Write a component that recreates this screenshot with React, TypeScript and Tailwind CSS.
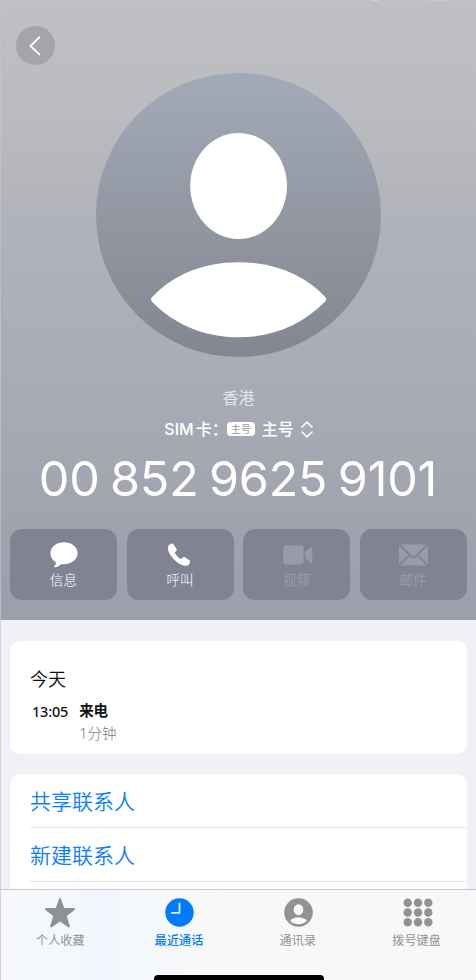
import type { ReactNode } from 'react';

interface Action {
  label: string;
  icon: ReactNode;
  disabled?: boolean;
}

interface Tab {
  label: string;
  icon: ReactNode;
  active?: boolean;
}

const actions: Action[] = [
  {
    label: '信息',
    icon: (
      <svg width="28" height="26" viewBox="0 0 28 26" fill="currentColor">
        <path d="M14 0.3C21.6 0.3 27.6 5.2 27.6 11.3C27.6 17.5 21.6 22.2 14 22.2C13 22.2 12.2 22.2 11.4 22C9.6 23.7 7.2 25.1 4.9 25.3C4 25.3 3.9 24.7 4.4 24.2C5.4 23 6 21.8 6 20.4C2.6 18.4 0.4 15.2 0.4 11.3C0.4 5.2 6.4 0.3 14 0.3Z" />
      </svg>
    ),
  },
  {
    label: '呼叫',
    icon: (
      <svg width="24" height="24" viewBox="0 0 24 24" fill="currentColor" className="mr-0.5">
        <path d="M3.3 1.1C4.7 0.2 6 0.6 6.9 1.9L9.3 5.4C10 6.5 9.9 7.4 9 8.3L8.1 9.2C7.8 9.6 7.8 10 8.1 10.5C9.4 12.6 11.2 14.4 13.3 15.8C13.8 16.1 14.2 16.1 14.6 15.8L15.5 14.8C16.4 13.9 17.3 13.8 18.4 14.5L22 17C23.2 17.9 23.5 19 22.7 20.3C21.3 22.6 19.1 23.3 16.5 22.6C12.8 21.6 9.3 18.9 6.3 15.7C3.5 12.7 1.6 9.5 1 6.6C0.6 4.2 1.3 2.3 3.3 1.1Z" />
      </svg>
    ),
  },
  {
    label: '视频',
    disabled: true,
    icon: (
      <svg width="30" height="20" viewBox="0 0 30 20" fill="currentColor" className="ml-[3px]">
        <rect x="0.2" y="0.5" width="20.4" height="19" rx="3.6" />
        <path d="M22.2 7L27.2 2.7C28.3 1.9 29.3 2.2 29.3 3.5V16.5C29.3 17.8 28.3 18.1 27.2 17.3L22.2 13Z" />
      </svg>
    ),
  },
  {
    label: '邮件',
    disabled: true,
    icon: (
      <svg width="29" height="22" viewBox="0 0 29 22" fill="currentColor">
        <path d="M1.5 0.5H27.5L16.6 11.1C15.2 12.5 13.8 12.5 12.4 11.1Z" />
        <path d="M0 1.8L9.4 11L0 20.2Z" />
        <path d="M29 1.8L19.6 11L29 20.2Z" />
        <path d="M1.5 21.5L10.5 12.2L11.6 13.2C13.5 15 15.5 15 17.4 13.2L18.5 12.2L27.5 21.5Z" />
      </svg>
    ),
  },
];

const tabs: Tab[] = [
  {
    label: '个人收藏',
    icon: (
      <svg width="32" height="30" viewBox="0 0 32 30" fill="currentColor" stroke="currentColor" strokeWidth="2" strokeLinejoin="round">
        <path d="M16 1L19.4 10.9L30 11.1L21.6 17.6L24.8 28.4L16 22.2L7.2 28.4L10.4 17.6L2 11.1L12.6 10.9Z" />
      </svg>
    ),
  },
  {
    label: '最近通话',
    active: true,
    icon: (
      <svg width="29" height="29" viewBox="0 0 29 29">
        <circle cx="14.5" cy="14.5" r="14.2" fill="#007aff" />
        <path d="M14.5 5.3V14.8H6.8" fill="none" stroke="#e6f2ff" strokeWidth="1.8" strokeLinecap="round" strokeLinejoin="round" />
      </svg>
    ),
  },
  {
    label: '通讯录',
    icon: (
      <svg width="29" height="29" viewBox="0 0 29 29" className="ml-0.5">
        <circle cx="14.5" cy="14.5" r="14.3" fill="#929294" />
        <ellipse cx="14.5" cy="11.7" rx="4.8" ry="5.5" fill="#f8f8f8" />
        <path d="M6 22.8C10 18 19 18 23 22.8C19 27.3 10 27.3 6 22.8Z" fill="#f8f8f8" />
      </svg>
    ),
  },
  {
    label: '拨号键盘',
    icon: (
      <svg width="30" height="29" viewBox="0 0 30 29" fill="#929294" className="ml-0.5">
        {[4.7, 14.5, 24.3].map((cy) =>
          [4.7, 15, 25.3].map((cx) => <circle key={`${cx}-${cy}`} cx={cx} cy={cy} r="4.2" />)
        )}
      </svg>
    ),
  },
];

export default function App() {
  return (
    <div className="relative flex h-[980px] w-[476px] flex-col overflow-hidden bg-[#f1f0f6] font-['Inter','Noto_Sans_CJK_SC',sans-serif]">
      {/* Contact header */}
      <header className="flex h-[620px] shrink-0 flex-col bg-[linear-gradient(180deg,#bfc0c4_0px,#babbbf_120px,#b4b5ba_190px,#b0b2bb_225px,#a9acb7_380px,#a2a5b0_500px,#9c9fab_620px)] pt-[26px]">
        <button type="button" className="ml-4 flex size-[39px] items-center justify-center rounded-full bg-[#a3a5a9]">
          <svg width="12" height="20" viewBox="0 0 12 20" fill="none" stroke="#fff" strokeWidth="1.9" strokeLinecap="round" strokeLinejoin="round" className="mr-0.5">
            <path d="M10.4 1.2L1.4 10L10.4 18.4" />
          </svg>
        </button>

        <div className="mx-auto mt-2 h-[284px] w-[285px] overflow-hidden rounded-full bg-linear-to-b from-[#a3aab7] to-[#82868f]">
          <svg width="285" height="284" viewBox="0 0 285 284" fill="#fff">
            <ellipse cx="142.6" cy="113" rx="48.4" ry="53" />
            <path d="M56 224.3C78 201 108 189.3 142.5 189.3C178 189.3 208 201.5 229.3 224Q231 226.3 229.3 228.5C206 252 176 264.3 142.5 264.3C109 264.3 79 252 56 228.7Q54 226.5 56 224.3Z" />
          </svg>
        </div>

        <div className="mt-[29px] pl-px text-center text-[16px] leading-6 text-[#e4e5e9]">香港</div>
        <div className="mt-[7px] flex h-6 items-center justify-center pl-px text-[16px] font-medium text-white">
          <span>SIM</span>
          <span className="ml-0.5">卡：</span>
          <span className="-ml-px flex h-[14px] w-[28px] items-center justify-center rounded-[4px] bg-white text-[10px] leading-none font-normal text-[#9a9daa]">主号</span>
          <span className="ml-[7px]">主号</span>
          <svg width="12" height="17" viewBox="0 0 12 17" fill="none" stroke="currentColor" strokeWidth="1.6" strokeLinecap="round" strokeLinejoin="round" className="ml-[7px]">
            <path d="M1 6L6 1.2L11 6M1 11L6 15.8L11 11" />
          </svg>
        </div>
        <h1 className="mt-2 text-center text-[48.5px] leading-[60px] font-[380] tracking-[-0.2px] [word-spacing:-3px] whitespace-nowrap text-white">00 852 9625 9101</h1>

        <div className="mt-[19.5px] grid grid-cols-4 gap-[9.5px] pr-[9.5px] pl-[10px]">
          {actions.map((action) => (
            <button
              key={action.label}
              type="button"
              disabled={action.disabled}
              className={`flex h-[71px] flex-col items-center rounded-xl bg-[#818392] pt-[13px] ${
                action.disabled ? 'font-normal text-[#999ca8]' : 'font-light text-white'
              }`}
            >
              <span className="flex h-[26px] items-center">{action.icon}</span>
              <span className="mt-0.5 text-[13.5px] leading-[20px]">{action.label}</span>
            </button>
          ))}
        </div>
      </header>

      <main className="flex min-h-0 flex-1 flex-col overflow-hidden pt-[21px] pr-[9px] pl-[10px]">
        {/* Call log */}
        <section className="h-[113px] shrink-0 rounded-[10px] bg-white pt-[25px] pl-5">
          <h2 className="text-[18px] leading-7 font-[350] text-[#111]">今天</h2>
          <div className="mt-1.5 flex gap-[11px] pl-0.5 leading-[22px]">
            <span className="font-['Noto_Sans',sans-serif] text-[14.5px] font-medium tracking-[-0.2px] text-[#111]">13:05</span>
            <div className="text-[14.5px]">
              <div className="font-bold text-[#111]">来电</div>
              <div className="font-['Noto_Sans','Noto_Sans_CJK_SC',sans-serif] font-light text-[#7c7c7e]">1分钟</div>
            </div>
          </div>
        </section>

        <section className="mt-5 shrink-0 rounded-[10px] bg-white pl-5 text-[21px] font-[350] text-[#0a7cff]">
          <div className="h-[54px] border-b border-[#e4e4e6] pt-px leading-[54px]">共享联系人</div>
          <div className="h-[54px] border-b border-[#e4e4e6] pt-px leading-[54px]">新建联系人</div>
          <div className="h-[54px]" />
        </section>
      </main>

      {/* Tab bar */}
      <nav className="grid h-[91px] shrink-0 grid-cols-4 border-t border-[#c6c6ca] bg-[linear-gradient(90deg,#f6f8fb,#f3f7fd_22%,#f8f8f8_48%)] pt-[7px] pl-px">
        {tabs.map((tab) => (
          <div
            key={tab.label}
            className={`flex flex-col items-center text-[12px] ${
              tab.active ? 'font-medium text-[#007aff]' : 'text-[#8e9296]'
            }`}
          >
            <span className="flex h-[31px] items-center">{tab.icon}</span>
            <span className="mt-1 tracking-[0.2px] leading-[18px]">{tab.label}</span>
          </div>
        ))}
      </nav>

      {/* Home indicator */}
      <div className="absolute bottom-0 left-[154px] h-[5px] w-[170px] rounded-t-[4px] bg-black" />
      <div className="absolute inset-y-0 left-0 w-px bg-[#c4c4c8]/70" />
      {/* Status bar edge */}
      <div className="absolute top-0 left-[371px] h-px w-[8px] bg-white/25" />
      <div className="absolute top-0 left-[427px] h-px w-[21px] bg-white/15" />
    </div>
  );
}
